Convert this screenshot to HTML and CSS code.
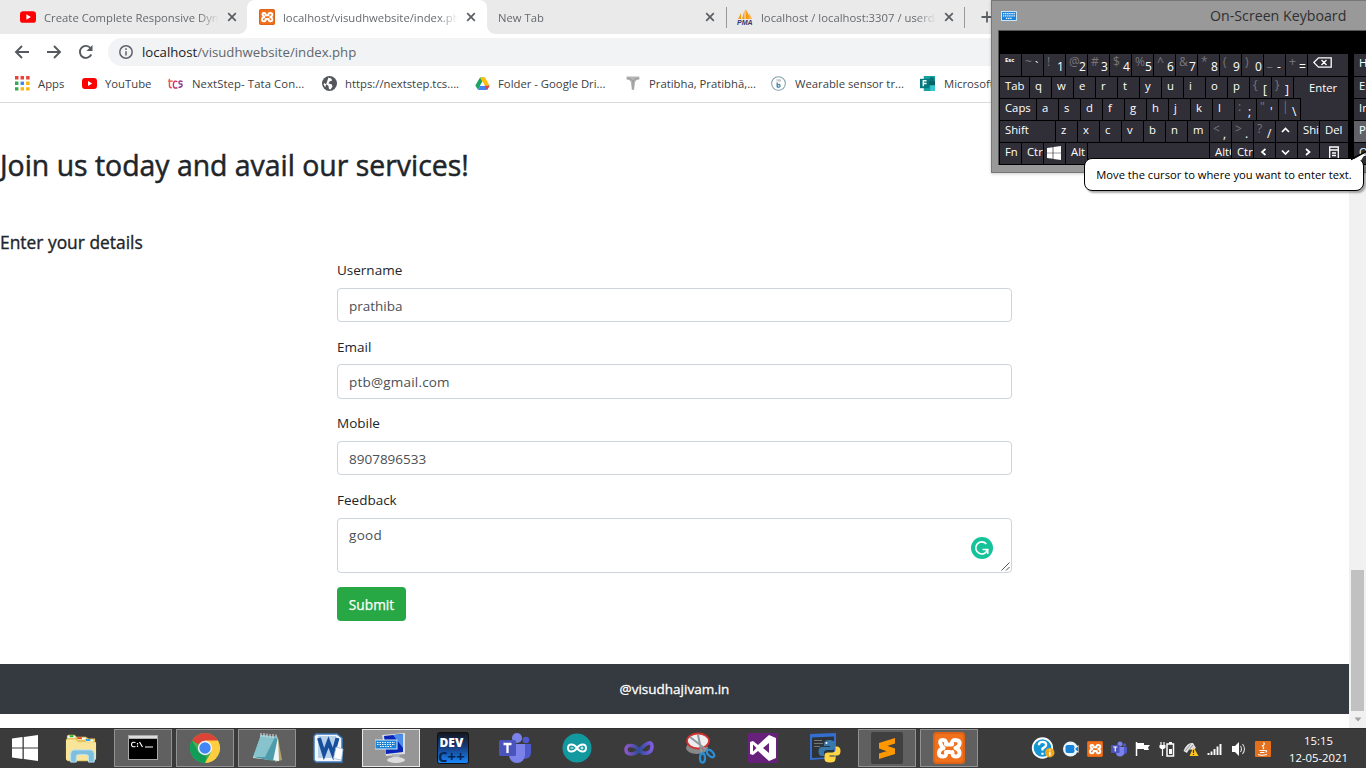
FILE: index.html
```html
<!DOCTYPE html>
<html lang="en">
<head>
<meta charset="utf-8">
<title>localhost/visudhwebsite/index.php</title>
<link rel="stylesheet" href="styles.css">
</head>
<body>
<svg class="defs" width="0" height="0">
  <defs>
    <symbol id="close" viewBox="0 0 10 10"><path d="M1.2 1.2l7.6 7.6M8.8 1.2L1.2 8.8" stroke="#5a5e63" stroke-width="1.7"/></symbol>
    <symbol id="youtube" viewBox="0 0 15 15"><rect y="2" width="15" height="11" rx="3" fill="#f00"/><path d="M6 5l4.2 2.5L6 10z" fill="#fff"/></symbol>
    <symbol id="xampp" viewBox="0 0 32 32"><rect width="32" height="32" rx="4" fill="#f0701c"/><rect x="1" y="1" width="30" height="30" rx="3" fill="none" stroke="#d95f12" stroke-width="1.5"/><path d="M8 12.500Q5.500 8 10 8Q13.500 8 13 12.500H19Q18.500 8 22 8Q27.500 8 26.500 12Q26 15 22.500 16Q26 17 26.500 20.500Q27 24.500 22.500 24.500Q19 24.500 19.500 20M8 12.500Q8.500 15 10.500 16Q6.500 17 6 20.500Q5.500 24.500 10 24.500Q14 24.500 13 20H17" fill="none" stroke="#fff" stroke-width="4" stroke-linecap="round" stroke-linejoin="round"/></symbol>
    <symbol id="teams" viewBox="0 0 32 32"><circle cx="18" cy="6" r="5" fill="#7b83eb"/><circle cx="27" cy="8" r="3.3" fill="#5059c9"/><path d="M20 12h12v9a6 6 0 0 1-9 5z" fill="#5059c9"/><path d="M10 12h16v11a8 8 0 0 1-16 0z" fill="#7b83eb"/><rect y="8" width="17" height="16" rx="1.5" fill="#4b53bc"/><path d="M4.500 12h8M8.500 12v9" stroke="#fff" stroke-width="2.300"/></symbol>
    <symbol id="winlogo" viewBox="0 0 26 26"><path d="M0 3.500l10.500-1.400v10.300H0zM11.800 1.900L26 0v12.400H11.800zM0 13.600h10.500v10.300L0 22.500zM11.800 13.600H26V26l-14.200-1.900z" fill="#fff"/></symbol>
  </defs>
</svg>

<div class="screen">
  <header class="browser">
    <div class="tabs">
      <div class="tab tab-first"><svg class="fav"><use href="#youtube"/></svg><span class="tab-title">Create Complete Responsive Dynamic</span><svg class="x"><use href="#close"/></svg></div>
      <div class="tab tab-active"><svg class="fav"><use href="#xampp"/></svg><span class="tab-title">localhost/visudhwebsite/index.php</span><svg class="x"><use href="#close"/></svg></div>
      <div class="tab tab-new"><span class="tab-title">New Tab</span><svg class="x"><use href="#close"/></svg></div>
      <div class="tab tab-last">
        <svg class="fav" viewBox="0 0 16 16"><path d="M1 10L4 4v6zM5 10L7.500 1v9zM8.500 10V0Q12 5 13 10z" fill="#f89c0e"/><path d="M12 10V4q2 3 3 6z" fill="#f7b75b"/><text x="0" y="15.500" class="pma">PMA</text></svg>
        <span class="tab-title">localhost / localhost:3307 / userdata</span><svg class="x"><use href="#close"/></svg></div>
      <svg class="plus" viewBox="0 0 12 12"><path d="M6 .5v11M.5 6h11" stroke="#5a5e63" stroke-width="1.800"/></svg>
    </div>
    <div class="toolbar">
      <svg class="nav" viewBox="0 0 16 16"><path d="M15 8H2.500M8 2L2 8l6 6" /></svg>
      <svg class="nav" viewBox="0 0 16 16"><path d="M1 8h12.500M8 2l6 6-6 6"/></svg>
      <svg class="nav" viewBox="0 0 16 16"><path d="M13.300 10.500A6 6 0 1 1 12.500 4"/><path d="M14.500 1v6h-6z" class="solid"/></svg>
      <div class="address"><svg class="info" viewBox="0 0 14 14"><circle cx="7" cy="7" r="6.200"/><path d="M7 6.200v4.300M7 3.300v1.600"/></svg><span class="url"><b>localhost</b>/visudhwebsite/index.php</span></div>
    </div>
    <nav class="bookmarks">
      <a><svg viewBox="0 0 14 14"><path d="M0 0h3.200v3.200H0zM5.200 0h3.200v3.200H5.200zM10.400 0h3.200v3.200h-3.200z" fill="#ea4335"/><path d="M0 5.200h3.200v3.200H0zM0 10.400h3.200v3.200H0z" fill="#34a853"/><path d="M5.200 5.200h3.200v3.200H5.200z" fill="#4285f4"/><path d="M10.400 5.200h3.200v3.200h-3.200zM5.200 10.400h3.200v3.200H5.200zM10.400 10.400h3.200v3.200h-3.200z" fill="#fbb50a"/></svg><span>Apps</span></a>
      <a><svg><use href="#youtube"/></svg><span>YouTube</span></a>
      <a class="tcs"><svg viewBox="0 0 16 16"><defs><linearGradient id="tg" gradientUnits="userSpaceOnUse" x1="0" y1="0" x2="16" y2="6"><stop stop-color="#f0862a"/><stop offset=".5" stop-color="#e0265c"/><stop offset="1" stop-color="#7b3a98"/></linearGradient></defs><path d="M1.500 3v7q0 2.500 2.500 2.500M0 5.500h5M10 6Q6 4 5.700 9T10 12.500M15.500 6q-4-1.500-3.800.8t2.800 1.700q2 3-3.300 3.800" fill="none" stroke="url(#tg)" stroke-width="1.500"/></svg><span>NextStep- Tata Con...</span></a>
      <a><svg viewBox="0 0 14 14"><circle cx="7" cy="7" r="7" fill="#53575c"/><path d="M6 1.500q1 1 2.500.6l1 2-2.500 1-1 1.800 3 .8.8 2L8 12.500l-1.500-.3L6 9 2 6.500 1.500 8 3 10.500" fill="#fff"/></svg><span>https://nextstep.tcs....</span></a>
      <a><svg viewBox="0 0 15 14"><path d="M5 1h5l-2.500 4L3 13.300.300 9z" fill="#1ea362"/><path d="M5 1h5l4.700 8.300H9.500z" fill="#ffc107"/><path d="M5 9.300h9.700L12 13.500H3z" fill="#4086f4"/><path d="M9.700 9.300h5L12 13.500z" fill="#ea4335"/><path d="M7.500 5L5 9.300h5z" fill="#fff"/></svg><span>Folder - Google Dri...</span></a>
      <a><svg viewBox="0 0 14 14"><path d="M.5.5h12v2.700q-3 0-4 2.300L7.500 13h-2L4.500 5.500Q3.500 3.200.5 3.200z" fill="#b4b4b4"/><path d="M1 2q4 0 5.500 3Q8 2 12 2M6.500 5v7" fill="none" stroke="#8d8d8d" stroke-width=".7"/></svg><span>Pratibha, Pratibhā,...</span></a>
      <a class="wear"><svg viewBox="0 0 16 16"><circle cx="8" cy="8" r="7.300" fill="#fff" stroke="#7f9fae" stroke-width="1.100"/><path d="M6.600 7v5M6.600 9.500q3-1.300 3 .8t-3 1.500" fill="none" stroke="#4e8da5" stroke-width="1.500"/><path d="M6.500 3v3M8 4h2v1.500H8z" fill="none" stroke="#aaa" stroke-width=".8"/></svg><span>Wearable sensor tr...</span></a>
      <a class="wear"><svg viewBox="0 0 16 16"><path d="M4 0h12v16H4z" fill="#17a2a0"/><path d="M9 5h7v5H9z" fill="#0b6064"/><circle cx="12.500" cy="3.500" r="2.500" fill="#0b7073"/><path d="M11 10h5v6h-5z" fill="#37c6d0"/><path d="M0 3h10v10H0z" fill="#007a7c"/><path d="M3.500 11V5h3.500M3.500 8H7" stroke="#fff" stroke-width="1.500" fill="none"/></svg><span>Microsoft Forms</span></a>
    </nav>
  </header>

  <div class="viewport">
    <main class="page">
      <h2>Join us today and avail our services!</h2>
      <h5>Enter your details</h5>
      <form class="details">
        <div class="group"><label>Username</label><div class="control">prathiba</div></div>
        <div class="group"><label>Email</label><div class="control email">ptb@gmail.com</div></div>
        <div class="group"><label>Mobile</label><div class="control">8907896533</div></div>
        <div class="group group-area"><label>Feedback</label><div class="control area">good
          <svg class="grammarly" viewBox="0 0 22 22"><circle cx="11" cy="11" r="11" fill="#15c39a"/><path d="M15.300 7A6 6 0 1 0 16.600 12.500M11.500 12.500h5.200V17" fill="none" stroke="#fff" stroke-width="1.700"/></svg>
          <svg class="grip" viewBox="0 0 9 9"><path d="M.5 8.500l8-8M5 8.500L8.500 5" stroke="#555"/></svg></div></div>
        <button type="button" class="submit">Submit</button>
      </form>
      <footer class="site-footer">@visudhajivam.in</footer>
    </main>
    <aside class="scrollbar"><span class="thumb"></span><svg viewBox="0 0 8 5"><path d="M.5.5h7L4 4.500z" fill="#a3a3a3"/></svg></aside>
  </div>

  <footer class="taskbar">
    <div class="start"><svg><use href="#winlogo"/></svg></div>
    <div class="apps">
      <div class="app"><svg viewBox="0 0 34 32"><path d="M2 4q0-2 2-2h6l2 2h10l3 2h7v22q0 2-3 2H4q-3 0-3-3z" fill="#e6c45c"/><path d="M3 3h8v2H3zM13 5h9v2h-9zM22 7h8v2h-8z" fill="#fff"/><path d="M5 2.500h4v2H5z" fill="#1eb53a"/><path d="M13 4.500h5v2h-5z" fill="#e84d2a"/><path d="M22 6.500h5v2h-5z" fill="#25a5e8"/><path d="M1 7h10l3 3h19v17q0 2-2 2H3q-2 0-2-2z" fill="#f8e59a"/><path d="M6 31v-9q0-4 4-4h17q4 0 4 4v9h-6v-6q0-2-3-2h-7q-3 0-3 2v6z" fill="#80bede" stroke="#b8e4f5"/></svg></div>
      <div class="app open"><svg viewBox="0 0 32 32"><rect x="1" y="3" width="30" height="25" fill="#aaa"/><path d="M2 4h28v2H2z" fill="#ddd"/><path d="M2 7h28v20H2z"/><path d="M8.500 10.500q-4-1-4 2t4 2M10.500 11v1.500M10.500 13.500v1.500M12.500 10l3 5M18 15h8" stroke="#fff" stroke-width="1.200" fill="none"/></svg></div>
      <div class="app open"><svg viewBox="0 0 32 32"><circle cx="16" cy="16" r="15" fill="#4caf50"/><path d="M16 16L3 8.500A15 15 0 0 1 29 8.500z" fill="#db4437"/><path d="M16 8.500h13A15 15 0 0 1 16 31l6.500-11.500z" fill="#ffcd40"/><path d="M16 31A15 15 0 0 1 3 8.500L9.500 19.800l8 4z" fill="#0f9d58"/><circle cx="16" cy="16" r="7.200" fill="#f4f4f4"/><circle cx="16" cy="16" r="5.700" fill="#4285f4"/></svg></div>
      <div class="app open"><svg viewBox="0 0 32 32"><path d="M27 6l4 22-7 2z" fill="#b5a36b"/><path d="M10 3l17 2 1 24-26-3z" fill="#eef6f7"/><path d="M10 3l17 2-5 24-20-4z" fill="#4e9bab"/><path d="M10 3l14 2-10 20-12 0z" fill="#86c3cd"/><path d="M10 1v4M13 1v4M16 1.500v4M19 2v4M22 2v4M25 2.500v4" stroke="#e4e4e4"/></svg></div>
      <div class="app"><svg viewBox="0 0 32 32"><path d="M3 2h21l5 4v24H3L1 28V4z" fill="#f4f8fc" stroke="#3c79bd" stroke-width="1.500"/><path d="M5 4h18v22H5z" fill="#b8d2ec"/><path d="M6 6l5 16 4.500-12L20 22l4.500-16" stroke="#174f9d" stroke-width="4" fill="none"/><path d="M23 15l7 2-1.500 11-8-1.500z" fill="#fff" stroke="#9fb8d6" stroke-width=".8"/></svg></div>
      <div class="app open current"><svg viewBox="0 0 32 32"><path d="M7 3l23-2v21L11 24z" fill="#ddd"/><path d="M9 4l19-2v18l-17 2z" fill="#0725b7"/><path d="M18 3l10-1v14z" fill="#4d8dea"/><path d="M17 22h7l1 5h-7z" fill="#b3b8bd"/><ellipse cx="21" cy="28" rx="9" ry="3" fill="#ddd"/><rect x="0" y="8" width="22" height="9" fill="#1c83d5" stroke="#d2e9fa"/><path d="M2 10.500h18M2 12.500h18M5 14.500h12" stroke="#fff" stroke-width="1" stroke-dasharray="1.500 1"/></svg></div>
      <div class="app"><svg viewBox="0 0 32 32"><defs><linearGradient id="dg" x2="0" y2="1"><stop stop-color="#15171d"/><stop offset=".45" stop-color="#173a7a"/><stop offset="1" stop-color="#178bff"/></linearGradient></defs><rect x=".5" y=".5" width="31" height="31" rx="2" fill="url(#dg)" stroke="#111"/><text x="2.500" y="14.500" class="dev">DEV</text><text x="1" y="30" class="cpp">C++</text></svg></div>
      <div class="app"><svg><use href="#teams"/></svg></div>
      <div class="app"><svg viewBox="0 0 32 32"><circle cx="16" cy="16" r="14.500" fill="#12999f"/><path d="M16 16c-3-4.500-9-5-9 0s6 4.500 9 0 9-5 9 0-6 4.500-9 0z" fill="none" stroke="#fff" stroke-width="2"/><path d="M9.500 16h3M19.500 16h3M21 14.500v3" stroke="#fff"/></svg></div>
      <div class="app"><svg viewBox="0 0 32 32"><defs><linearGradient id="ig"><stop stop-color="#8e55c7"/><stop offset=".5" stop-color="#2c4c9c"/><stop offset="1" stop-color="#815ce0"/></linearGradient></defs><path d="M16 18C11 12 3 12 3 17.500S11 24 17 17.500 29 8 29 14.500 21 24 16 18z" fill="none" stroke="url(#ig)" stroke-width="3.600"/></svg></div>
      <div class="app"><svg viewBox="0 0 32 32"><ellipse cx="12" cy="16" rx="11" ry="6" fill="#888"/><ellipse cx="13" cy="9" rx="11" ry="7.500" fill="#eee" stroke="#d23030" stroke-width="1.800"/><path d="M5 5l18 14M13 3l4 19" stroke="#8f989f" stroke-width="2"/><ellipse cx="17.500" cy="26" rx="2.500" ry="4.500" fill="none" stroke="#2b8fd6" stroke-width="2.300"/><ellipse cx="25.500" cy="21.500" rx="2.500" ry="4.500" transform="rotate(-45 25.500 21.500)" fill="none" stroke="#2b8fd6" stroke-width="2.300"/></svg></div>
      <div class="app"><svg viewBox="0 0 32 32"><rect x="1" y="1" width="30" height="30" fill="#68217a"/><path d="M22 3l7 3v20l-7 3-11-10-5 4-3-1V10l3-1 5 4zM22 11l-6 5 6 5zM6 12.500v7l3.500-3.500z" fill="#fff" fill-rule="evenodd"/></svg></div>
      <div class="app"><svg viewBox="0 0 32 32"><path d="M1 2l26-1v25L1 28z" fill="#346ed0"/><path d="M3 5.500l22-1V25L3 26z" fill="#2d3336"/><path d="M5 8.500h8M5 11.500h9M5 14.500h6" stroke="#777"/><path d="M20 8q-5 0-5 3.500V14h6v1h-8q-3.500 0-3.500 4.500T13 24h2v-3q0-3 3.500-3H23q3 0 3-3v-3.500Q26 8 20 8z" fill="#3878ad"/><path d="M21 30.500q5.500 0 5.500-3.500v-2.500h-6v-1h8q3-.5 3-4.500t-3-4.500H26.500v3q0 3-3.500 3h-4q-3.500 0-3.500 3V27q0 3.500 5.500 3.500z" fill="#ffd546"/><circle cx="17.500" cy="11" r="1" fill="#fff"/></svg></div>
      <div class="app open"><svg viewBox="0 0 32 32"><rect width="32" height="32" rx="2" fill="#404040"/><path d="M24 6v5.500L8 16.500V11zM8 11l16 5.500V22L8 16.500zM24 16.500V22L8 27v-5.500z" fill="#ff9800"/></svg></div>
      <div class="app open"><svg><use href="#xampp"/></svg></div>
    </div>
    <div class="tray">
      <svg class="help" viewBox="0 0 22 22"><circle cx="10.500" cy="10.500" r="9.300" fill="#1695d3" stroke="#fff" stroke-width="1.800"/><path d="M7 8q0-3.300 3.500-3.300T14 7.500q0 2-3.500 3.500v2M10.500 15v2" fill="none" stroke="#fff" stroke-width="2.200"/><circle cx="17.500" cy="15" r="4.500" fill="#f3a61c"/><path d="M17.500 12v1M17.500 14v4" stroke="#fff" stroke-width="1.500"/></svg>
      <svg viewBox="0 0 16 16"><circle cx="7.500" cy="8" r="7.500" fill="#e9f5fb"/><rect x="2.500" y="4" width="9" height="8" rx="2" fill="#1683d8"/><path d="M11.500 7l4-3v8l-4-3z" fill="#fff"/><path d="M12.500 7.300l2.500-1.800v5l-2.500-1.800z" fill="#1683d8"/></svg>
      <svg><use href="#xampp"/></svg>
      <svg><use href="#teams"/></svg>
      <svg viewBox="0 0 16 16"><path d="M1.500 1v14" stroke="#fff" stroke-width="1.500"/><path d="M2 2h7v6H2zM9 4h6l-2 2.500 1 2.500H9z" fill="#fff"/></svg>
      <svg viewBox="0 0 16 16"><path d="M2 1v3M5 1v3M3.500 7v8" stroke="#fff" stroke-width="1.200"/><path d="M.5 4h6v2.500l-1.500 1.500H2L.5 6.500z" fill="#fff"/><rect x="8" y="3" width="6.500" height="12" fill="#3b3b3b" stroke="#fff" stroke-width="1.500"/><path d="M10 1h3v2h-3zM10 8h3v5h-3z" fill="#fff"/></svg>
      <svg viewBox="0 0 16 16"><path d="M.5 10Q4 1 10 2l3 5-3 2q-4-2-6 3z" fill="#e4e4e4"/><path d="M2.500 9.500l5-6M5 10l5-6" stroke="#777" stroke-width=".8"/><path d="M10.500 6l5 9h-9z" fill="#ffc71e"/><path d="M10.500 9v3M10.500 13v1" stroke="#333" stroke-width="1.200"/></svg>
      <svg viewBox="0 0 16 16"><path d="M1.500 12v2M4.500 10.500V14M7.500 8v6M10.500 5.500V14M13.500 3v11" stroke="#fff" stroke-width="1.900"/></svg>
      <svg viewBox="0 0 16 16"><path d="M1 5h3l4-4v14l-4-4H1z" fill="#fff"/><path d="M9.500 5q2 3 0 6M11.500 3q4 5 0 10" stroke="#ddd" stroke-width="1.100" fill="none"/></svg>
      <svg viewBox="0 0 16 16"><rect width="16" height="16" rx="1" fill="#e4701e"/><path d="M8.500 1.500q2 1.500-1 3.500 2 1.500.5 3M4.500 9.500h5.500q2.500 0 1 2M5 11.500h4.500M3 13.500q4 1.500 9 0" stroke="#fff" stroke-width="1.200" fill="none"/></svg>
    </div>
    <div class="clock"><span>15:15</span><span>12-05-2021</span></div>
  </footer>

  <section class="osk">
    <div class="osk-title"><svg viewBox="0 0 16 10"><rect x=".5" y=".5" width="15" height="9" fill="#1b84dc" stroke="#c9e4f8"/><path d="M2 2.700h12M2 4.900h12M5 7.300h6" stroke="#fff" stroke-width="1.200" stroke-dasharray="1.300 .8"/></svg><span>On-Screen Keyboard</span></div>
    <div class="board">
      <div class="keys">
        <div class="row"><i class="k esc">Esc</i><i class="k s"><u>~</u><b>`</b></i><i class="k s"><u>!</u><b>1</b></i><i class="k s"><u>@</u><b>2</b></i><i class="k s"><u>#</u><b>3</b></i><i class="k s"><u>$</u><b>4</b></i><i class="k s"><u>%</u><b>5</b></i><i class="k s"><u>^</u><b>6</b></i><i class="k s"><u>&amp;</u><b>7</b></i><i class="k s"><u>*</u><b>8</b></i><i class="k s"><u>(</u><b>9</b></i><i class="k s"><u>)</u><b>0</b></i><i class="k s"><u>_</u><b>-</b></i><i class="k s"><u>+</u><b>=</b></i><i class="k grow"><svg width="19" height="11" viewBox="0 0 19 11"><path d="M.800 5.500L5.500.800h12.700v9.400H5.500zM8.500 3l5 5M13.500 3l-5 5" fill="none" stroke="#fff" stroke-width="1.300"/></svg></i></div>
        <div class="mid">
          <div class="mid-rows">
            <div class="row"><i class="k tab-key">Tab</i><i class="k">q</i><i class="k">w</i><i class="k">e</i><i class="k">r</i><i class="k">t</i><i class="k">y</i><i class="k">u</i><i class="k">i</i><i class="k">o</i><i class="k">p</i><i class="k s"><u>{</u><b>[</b></i><i class="k s"><u>}</u><b>]</b></i><i class="k grow joint"></i></div>
            <div class="row"><i class="k caps">Caps</i><i class="k">a</i><i class="k">s</i><i class="k">d</i><i class="k">f</i><i class="k">g</i><i class="k">h</i><i class="k">j</i><i class="k">k</i><i class="k">l</i><i class="k s"><u>:</u><b>;</b></i><i class="k s"><u>"</u><b>'</b></i><i class="k s"><u>|</u><b>\</b></i></div>
          </div>
          <i class="k enter">Enter</i>
        </div>
        <div class="row"><i class="k shift">Shift</i><i class="k">z</i><i class="k">x</i><i class="k">c</i><i class="k">v</i><i class="k">b</i><i class="k">n</i><i class="k">m</i><i class="k s"><u>&lt;</u><b>,</b></i><i class="k s"><u>&gt;</u><b>.</b></i><i class="k s"><u>?</u><b>/</b></i><i class="k"><svg width="9" height="12" viewBox="0 0 9 12"><path d="M1 8l3.500-3.500L8 8" class="chev"/></svg></i><i class="k">Shift</i><i class="k grow del">Del</i></div>
        <div class="row"><i class="k">Fn</i><i class="k">Ctrl</i><i class="k win"><svg width="14" height="14"><use href="#winlogo"/></svg></i><i class="k">Alt</i><i class="k grow"></i><i class="k">AltGr</i><i class="k">Ctrl</i><i class="k"><svg width="9" height="12" viewBox="0 0 9 12"><path d="M6.500 3L3 6l3.500 3" class="chev"/></svg></i><i class="k"><svg width="9" height="12" viewBox="0 0 9 12"><path d="M1 4.500L4.500 8 8 4.500" class="chev"/></svg></i><i class="k"><svg width="9" height="12" viewBox="0 0 9 12"><path d="M3 3l3.500 3L3 9" class="chev"/></svg></i><i class="k menu"><svg width="10" height="14" viewBox="0 0 10 14"><path d="M.7 1h8.600v12H.700zM.7 4h8.600M3 7h4M3 9.500h4" fill="none" stroke="#fff" stroke-width="1.300"/></svg></i></div>
      </div>
      <div class="side"><i class="k">Home</i><i class="k">End</i><i class="k">Insert</i><i class="k lit">Pause</i><i class="k">Options</i></div>
    </div>
  </section>
  <div class="balloon"><svg viewBox="0 0 18 10"><path d="M4 8.500L17.500.500 12 9.500" fill="#fff"/><path d="M2 8.500L17.500.500" stroke="#000" stroke-width="1.500"/></svg><span>Move the cursor to where you want to enter text.</span></div>
</div>
</body>
</html>
```

FILE: styles.css
```css
* { box-sizing: border-box; }
body { margin: 0; background: #fff; overflow: hidden; font-family: "Open Sans", "Noto Sans", sans-serif; font-size: 11.3px; color: #212529; }
svg { display: block; flex: none; }
.defs { position: absolute; }
.screen { position: relative; width: 1366px; height: 768px; display: flex; flex-direction: column; overflow: hidden; }

/* browser chrome */
.browser { height: 103px; border-bottom: 1px solid #d9dadc; }
.tabs { display: flex; height: 34px; background: #eaeaea; align-items: stretch; }
.tab { display: flex; align-items: center; width: 240px; padding: 0 11px 0 12px; color: #66696d; }
.tab-first { width: 247px; padding-left: 20px; padding-right: 10px; border-radius: 0 0 8px 0; }
.tab-active { background: #fff; border-radius: 8px 8px 0 0; position: relative; }
.tab-active::before, .tab-active::after { content: ""; position: absolute; bottom: 0; width: 8px; height: 8px; }
.tab-active::before { left: -8px; background: radial-gradient(circle at 0 0, #eaeaea 7.5px, #fff 8px); }
.tab-active::after { right: -8px; background: radial-gradient(circle at 100% 0, #eaeaea 7.5px, #fff 8px); }
.tab-new { padding-left: 11px; border-right: 1px solid #999; border-image: linear-gradient(#eaeaea 8px, #999 8px 27px, #eaeaea 27px) 1; }
.tab-last { width: 238px; padding-left: 10px; padding-right: 10px; border-right: 1px solid #999; border-image: linear-gradient(#eaeaea 8px, #999 8px 27px, #eaeaea 27px) 1; }
.fav { width: 16px; height: 16px; margin-right: 8px; }
.tab-title { flex: 1; overflow: hidden; white-space: nowrap; margin-right: 8px; -webkit-mask-image: linear-gradient(90deg, #000 calc(100% - 20px), transparent); mask-image: linear-gradient(90deg, #000 calc(100% - 20px), transparent); }
.x { width: 10px; height: 10px; }
.plus { width: 12px; height: 12px; margin: 11px 0 0 16px; }
.pma { font: italic 900 7px "Liberation Sans", sans-serif; fill: #363670; }
.toolbar { display: flex; align-items: center; height: 36px; padding: 0 0 0 14px; gap: 16px; }
.nav { width: 16px; height: 16px; fill: none; stroke: #55595e; stroke-width: 1.9; }
.nav .solid { fill: #55595e; stroke: none; }
.address { flex: 1; height: 28px; margin-left: -2px; padding-left: 11px; background: #f1f3f4; border-radius: 14px 0 0 14px; display: flex; align-items: center; gap: 9px; }
.info { width: 14px; height: 14px; fill: none; stroke: #5f6368; stroke-width: 1.5; }
.url { font-size: 13.2px; color: #62666b; }
.url b { font-weight: 400; color: #202124; }
.bookmarks { display: grid; grid-template-columns: 67px 86px 154px 153px 151px 145px 149px 1fr; height: 32px; padding: 0 0 6px 15px; align-items: center; color: #3c4043; }
.bookmarks a { display: flex; align-items: center; gap: 8px; white-space: nowrap; }
.bookmarks .tcs { gap: 9px; letter-spacing: .1px; }
.bookmarks .wear { gap: 9px; }
.bookmarks svg { width: 15px; height: 15px; }

/* web page */
.viewport { display: flex; height: 625px; }
.page { width: 1349px; }
h2 { margin: 0; padding-top: 44px; height: 128px; font-size: 28.4px; line-height: 36px; font-weight: 400; -webkit-text-stroke: .5px; white-space: nowrap; }
h5 { margin: 0; height: 28px; font-size: 17.4px; line-height: 22px; font-weight: 400; -webkit-text-stroke: .35px; }
.details { width: 675px; height: 405px; margin: 0 auto; font-size: 13.5px; }
.group { height: 76.7px; }
.group label { display: block; height: 29px; line-height: 23.6px; }
.group-area { height: 98px; }
.control { height: 34px; padding: 0 11px; line-height: 34px; border: 1px solid #ced4da; border-radius: 4px; color: #495057; }
.email { height: 35px; margin-top: -1px; letter-spacing: .2px; }
.area { position: relative; height: 55px; line-height: 33px; letter-spacing: .3px; }
.grammarly { position: absolute; right: 18px; top: 18px; width: 22px; height: 22px; }
.grip { position: absolute; right: 1px; bottom: 1px; width: 9px; height: 9px; }
.submit { display: block; width: 69px; height: 34px; padding: 0; border: 0; border-radius: 4px; background: #28a745; color: #fff; font: 400 13.7px "Open Sans", sans-serif; -webkit-text-stroke: .25px; }
.site-footer { height: 50px; background: #343a40; color: #fff; display: grid; place-items: center; font-size: 13.5px; -webkit-text-stroke: .3px; }
.scrollbar { width: 17px; background: #f1f1f1; display: flex; flex-direction: column; align-items: center; justify-content: flex-end; }
.thumb { width: 13px; height: 141px; background: #c1c1c1; }
.scrollbar svg { width: 8px; height: 5px; margin: 6px 0; }

/* taskbar */
.taskbar { display: flex; height: 40px; background: #3b3b3b; border-top: 1px solid #303030; }
.start { width: 52px; padding: 6px 0 0 12px; }
.start svg { width: 26px; height: 26px; }
.apps { display: flex; gap: 4px; width: 979px; padding-right: 49px; }
.app { width: 58px; height: 38px; display: grid; place-items: center; }
.app svg { width: 32px; height: 32px; }
.open { background: #606060; border: 1px solid #929292; }
.current { background: #969696; border-color: #e9e9e9; }
.dev { font: 800 12px "Open Sans", sans-serif; fill: #fff; }
.cpp { font: 700 15px "Open Sans", sans-serif; fill: #072555; }
.tray { display: flex; align-items: center; gap: 8px; width: 245px; }
.tray svg { width: 16px; height: 16px; }
.tray .help { width: 24px; height: 23px; }
.clock { display: flex; flex-direction: column; align-items: center; width: 85px; padding-top: 3px; line-height: 17px; color: #fff; }

/* on-screen keyboard */
.osk { position: absolute; left: 991px; top: 0; width: 375px; height: 173px; background: #999; border: 1px solid #777; border-right: 0; overflow: hidden; box-shadow: 0 1px 3px #0003; }
.osk-title { height: 29px; display: flex; align-items: center; padding-left: 9px; color: #303030; font-size: 14.2px; }
.osk-title svg { width: 16px; height: 10px; }
.osk-title span { margin-left: 193px; white-space: nowrap; }
.board { display: flex; gap: 6px; width: 400px; height: 135px; margin-left: 6px; padding: 23px 0 0 1px; background: #000; border-top: 1px solid #555; border-left: 1px solid #555; }
.keys { width: 348px; display: flex; flex-direction: column; gap: 1px; }
.row { display: flex; gap: 1px; height: 21px; }
.row:first-child { height: 22px; }
.k { display: block; flex: none; width: 21px; height: 100%; padding-left: 5px; overflow: hidden; white-space: nowrap; background: #302f38; color: #fff; font-style: normal; font-size: 11.3px; line-height: 18px; }
.k svg { margin-top: 3px; }
.k.grow { flex: 1; }
.esc { font-size: 6px; font-weight: 700; line-height: 12px; }
.s { display: grid; grid-template-columns: 8px 1fr; padding-left: 3px; }
.s u { color: #77767c; font-size: 12px; text-decoration: none; line-height: 15px; }
.s b { font-size: 12px; font-weight: 400; line-height: 26px; padding-left: 2px; }
.tab-key { width: 29px; }
.caps { width: 36px; }
.shift { width: 55px; }
.mid { display: flex; height: 43px; }
.mid-rows { width: 301px; display: flex; flex-direction: column; gap: 1px; }
.mid-rows .row:first-child { height: 21px; }
.enter { width: 47px; padding-left: 9px; line-height: 22px; text-indent: -1px; }
.win { padding-left: 3px; }
.row .menu { width: 28px; padding-left: 9px; }
.chev { fill: none; stroke: #fff; stroke-width: 1.7; }
.side { display: grid; grid-template-rows: 22px repeat(4, 21px); gap: 1px; }
.side .lit { background: #626168; }
.balloon { position: absolute; left: 1084px; top: 158px; width: 280px; height: 33px; display: flex; align-items: center; justify-content: center; border: 1px solid #000; border-radius: 8px; background: #fff; color: #000; font-size: 11.2px; box-shadow: 2px 2px 2px #0005; white-space: nowrap; }
.balloon svg { position: absolute; left: 264px; top: -8px; width: 18px; height: 10px; }
```
